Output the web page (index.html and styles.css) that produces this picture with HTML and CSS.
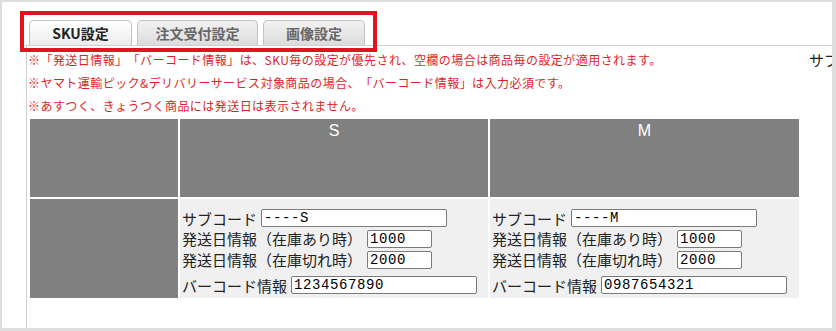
FILE: index.html
```html
<!DOCTYPE html>
<html lang="ja">
<head>
  <meta charset="utf-8">
  <title>SKU設定</title>
  <link rel="stylesheet" href="styles.css">
</head>
<body>
  <div class="frame">
    <div class="tabs">
      <span class="tab tab-active tab-sku">SKU設定</span>
      <span class="tab tab-order">注文受付設定</span>
      <span class="tab tab-image">画像設定</span>
    </div>

    <div class="panel">
      <div class="notes-row">
        <div class="notes">
          <p>※「発送日情報」「バーコード情報」は、SKU毎の設定が優先され、空欄の場合は商品毎の設定が適用されます。</p>
          <p>※ヤマト運輸ピック&amp;デリバリーサービス対象商品の場合、「バーコード情報」は入力必須です。</p>
          <p>※あすつく、きょうつく商品には発送日は表示されません。</p>
        </div>
        <span class="stray">サブコード</span>
      </div>

      <table class="sku-table">
        <colgroup>
          <col class="col-side">
          <col class="col-s">
          <col class="col-m">
        </colgroup>
        <tr class="head-row">
          <th></th>
          <th>S</th>
          <th>M</th>
        </tr>
        <tr class="body-row">
          <td class="side-cell"></td>
          <td class="sku-cell">
            <div class="field"><span class="label">サブコード</span><input class="input-wide" type="text" value="----S"></div>
            <div class="field"><span class="label">発送日情報（在庫あり時）</span><input class="input-short" type="text" value="1000"></div>
            <div class="field"><span class="label">発送日情報（在庫切れ時）</span><input class="input-short" type="text" value="2000"></div>
            <div class="field field-last"><span class="label">バーコード情報</span><input class="input-wide" type="text" value="1234567890"></div>
          </td>
          <td class="sku-cell">
            <div class="field"><span class="label">サブコード</span><input class="input-wide" type="text" value="----M"></div>
            <div class="field"><span class="label">発送日情報（在庫あり時）</span><input class="input-short" type="text" value="1000"></div>
            <div class="field"><span class="label">発送日情報（在庫切れ時）</span><input class="input-short" type="text" value="2000"></div>
            <div class="field field-last"><span class="label">バーコード情報</span><input class="input-wide" type="text" value="0987654321"></div>
          </td>
        </tr>
      </table>
    </div>

    <!-- annotation box around the tabs -->
    <div class="highlight"></div>
  </div>
</body>
</html>
```

FILE: styles.css
```css
* {
  box-sizing: border-box;
}
body {
  margin: 0;
  background: #fff;
  font-family: "Noto Sans CJK JP", "Noto Sans", sans-serif;
  text-spacing-trim: space-all;
}
.frame {
  position: relative;
  width: 836px;
  height: 331px;
  border-style: solid;
  border-color: #dedede;
  border-width: 2px 4px 3px 2px;
  overflow: hidden;
  background: #fff;
}
.tabs {
  display: flex;
  gap: 5px;
  padding: 18px 0 0 27px;
}
.tab {
  height: 25px;
  border: 1px solid #c2c2c2;
  border-bottom: none;
  border-radius: 5px 5px 0 0;
  background: linear-gradient(#f2f2f2, #dcdcdc);
  color: #666;
  font-size: 14px;
  font-weight: bold;
  line-height: 24px;
  text-align: center;
}
.tab-active {
  background: linear-gradient(#ffffff, #ececec);
  color: #222;
}
.tab-sku {
  width: 103px;
}
.tab-order {
  width: 121px;
}
.tab-image {
  width: 102px;
}
.panel {
  margin-left: 24px;
  height: 300px;
  padding: 2px 0 0 1px;
  border-top: 1px solid #cfcfcf;
  border-left: 1px solid #cfcfcf;
  overflow: hidden;
}
.notes-row {
  display: flex;
}
.notes {
  flex: 0 0 781px;
}
.notes p {
  margin: 0;
  color: #de1f27;
  font-size: 12px;
  letter-spacing: 0.45px;
  line-height: 23px;
  white-space: nowrap;
}
.stray {
  flex: 0 0 auto;
  color: #222;
  font-size: 15px;
  line-height: 23px;
  white-space: nowrap;
}
.sku-table {
  table-layout: fixed;
  width: 773px;
  border-spacing: 2px;
}
.col-side {
  width: 148px;
}
.col-s {
  width: 308px;
}
.col-m {
  width: 309px;
}
.head-row th {
  height: 78px;
  padding: 3px 0 0;
  background: #808080;
  color: #fff;
  font-family: "Liberation Sans", Arial, sans-serif;
  font-size: 16px;
  font-weight: normal;
  vertical-align: top;
  line-height: 18px;
}
.side-cell {
  background: #808080;
}
.sku-cell {
  padding: 9px 0 3px 2px;
  background: #f0f0f0;
  vertical-align: top;
}
.field {
  display: flex;
  align-items: center;
  height: 20px;
}
.field + .field {
  height: 21px;
}
.field-last {
  margin-top: 5px;
}
.field + .field-last {
  height: 20px;
}
.label {
  color: #222;
  font-size: 15px;
  white-space: nowrap;
}
.field input {
  height: 18px;
  margin: 0 0 0 4px;
  padding: 0 2px;
  border: 1px solid #7a7a7a;
  border-radius: 2px;
  background: #fff;
  color: #000;
  font-family: "Liberation Mono", monospace;
  font-size: 14px;
  letter-spacing: 0.6px;
}
.input-wide {
  width: 186px;
}
.input-short {
  width: 65px;
  margin-left: 5px !important;
}
.highlight {
  position: absolute;
  left: 18px;
  top: 9px;
  width: 357px;
  height: 41px;
  border: 4px solid #e0141e;
}
```
